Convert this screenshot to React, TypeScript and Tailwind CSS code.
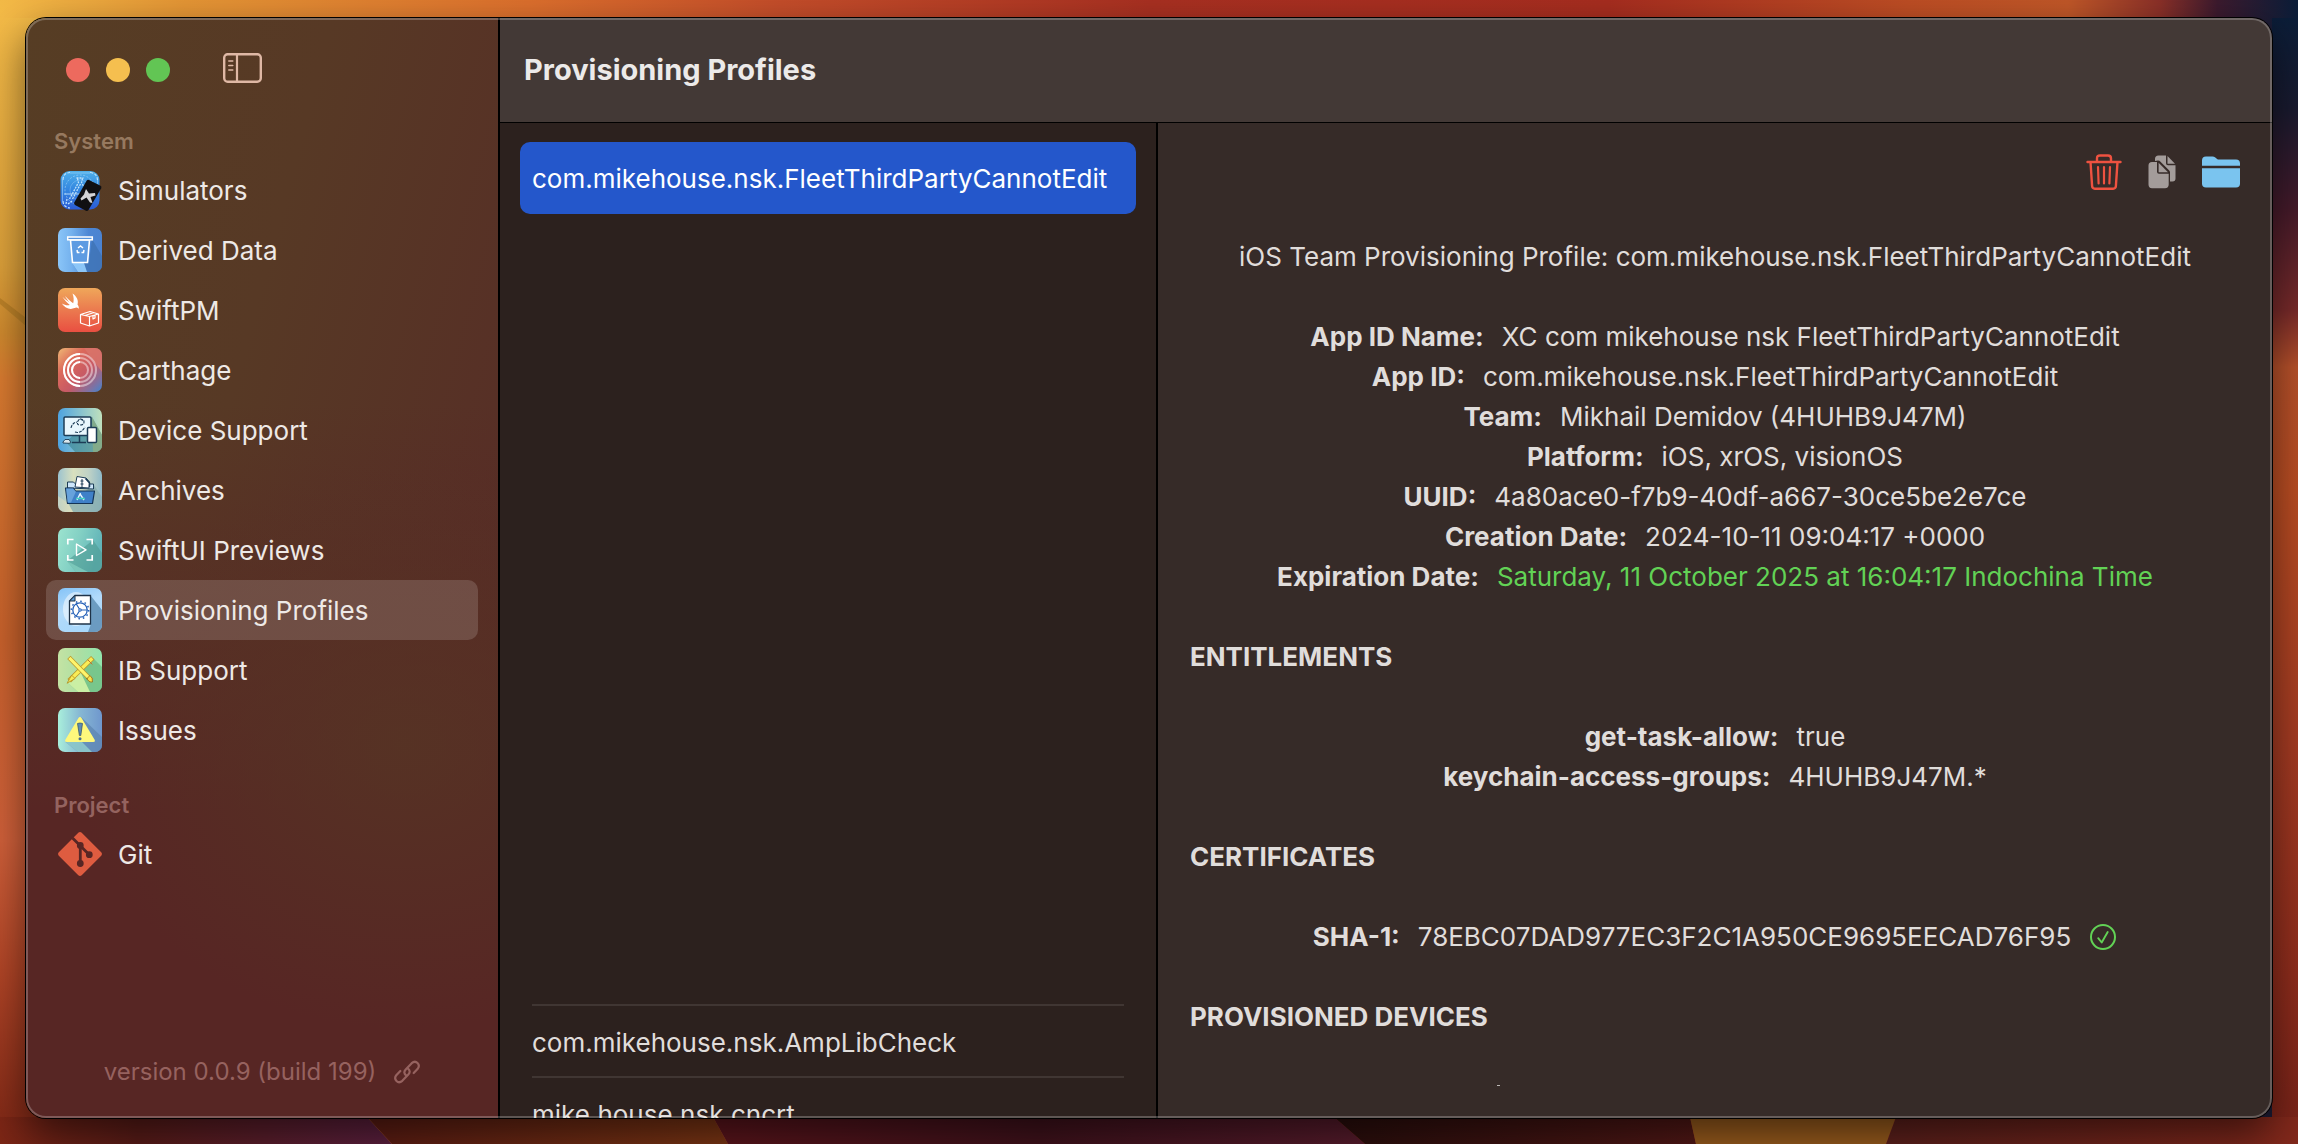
import type { ReactNode } from "react";

/* ---------- sidebar artwork, 44 x 44 tiles ---------- */

type TileProps = { id: string; x2?: number; y2?: number; stops: [number, string][]; children: ReactNode };

function Tile({ id, x2 = 0, y2 = 0, stops, children }: TileProps) {
  return (
    <svg viewBox="0 0 44 44" className="size-11 shrink-0" aria-hidden="true">
      <defs>
        <linearGradient id={id} x1="0" y1="0" x2={x2} y2={y2}>
          {stops.map(([offset, color]) => (
            <stop key={offset} offset={offset} stopColor={color} />
          ))}
        </linearGradient>
        <clipPath id={id + "-clip"}>
          <rect width="44" height="44" rx="7" />
        </clipPath>
      </defs>
      <g clipPath={`url(#${id}-clip)`}>
        <rect width="44" height="44" fill={`url(#${id})`} />
        {children}
      </g>
    </svg>
  );
}

function SimulatorsIcon() {
  return (
    <svg viewBox="0 0 44 44" className="size-11 shrink-0" aria-hidden="true">
      <defs>
        <linearGradient id="sim" x1="0" y1="0" x2="0" y2="1">
          <stop offset="0" stopColor="#4fb0ea" />
          <stop offset="0.5" stopColor="#3285e0" />
          <stop offset="1" stopColor="#2c5cd6" />
        </linearGradient>
      </defs>
      <rect x="2.5" y="3" width="39" height="38.500" rx="9" fill="url(#sim)" />
      <g fill="none" stroke="#bfe2fb">
        <path d="M4.500 33V12M39.500 12v4M12 5h20" strokeWidth="0.800" opacity="0.600" />
        <path d="M5 12q0-7 7-7.500M32 4.500q7 .5 7.500 7.500M5 33q0 6 7 7" strokeWidth="1.200" strokeDasharray="3 1.500" />
        <circle cx="22" cy="22" r="15" strokeWidth="0.700" strokeDasharray="2 1.500" opacity="0.700" />
        <circle cx="22" cy="22" r="10" strokeWidth="0.600" opacity="0.500" />
        <path d="M18.500 10h7M19.500 10.500l1 4-9 16.500M24.500 10.500l-1 4 5 9M22.500 16l-8.500 16M9 31l-1 5M14 33l-4 3" strokeWidth="1.300" strokeDasharray="2 1" />
        <path d="M6 26h16" strokeWidth="0.900" />
      </g>
      <path d="M31 12l11.500 5.800q1.500 .9 .7 2.400L30.500 42q-1 1.600-2.600 .8L17 37q-1.500-.8-.7-2.400L28.600 12.800q.9-1.500 2.400-.8z" fill="#101013" />
      <path d="M28 21l3 4.500 6-.5.500 2.500-5 1.500 2 6-2.500-.5-3.500-5-5 3-1-2 3.500-4z" fill="#d4d4d6" />
    </svg>
  );
}

function DerivedDataIcon() {
  return (
    <Tile id="derived" x2={1} stops={[[0, "#8ac5f8"], [0.3, "#75b2ee"], [0.7, "#4c86d4"], [1, "#4b83d0"]]}>
      <path d="M34 11l10 17v16H20l-6-9 17-1z" fill="#3d70b0" opacity="0.700" />
      <path d="M14 35l6 9h9l-3-9z" fill="#8cc6f8" />
      <path d="M12.500 12h19l-2 22.500h-15z" fill="#5d9be2" stroke="#fff" strokeWidth="1.600" />
      <rect x="9.700" y="9" width="24.600" height="2.800" fill="#5593dc" stroke="#fff" strokeWidth="1.500" />
      <path d="M20 20l2.500-2 2.500 2M19 22l.5 2.500h2M26 22l-.5 2.500h-2" fill="none" stroke="#fff" strokeWidth="1.500" />
    </Tile>
  );
}

function SwiftPMIcon() {
  return (
    <Tile id="spm" y2={1} stops={[[0, "#efa75a"], [0.5, "#eb7a4f"], [1, "#e94f41"]]}>
      <path
        d="M14.500 5.500c4.200 2.800 6.300 7 5 11 1.400 1.800 1.500 3.600 1.100 4.300-1.300-1.500-2.600-1.400-4-.7-4.600 2-9.500 .3-12.800-4.600 3.200 1.800 6 2.300 8 1.400-3-2.300-5.700-5.300-7.400-8.100 2.400 2.200 5.200 4.400 7.200 5.700-1.700-1.900-3.500-4.400-4.600-6.500 2.700 2.900 5.600 5.400 8.200 7.200.8-3 .6-6.400-.7-9.700z"
        fill="#fff"
      />
      <path d="M22.500 26.500l9 2 9-2.500v9l-9 3-9-3zM31.500 28.500V38M22.500 26.500l9.500-3 8.500 2.500M27 27.500l9-3M35 27v4l2-1v-3" fill="none" stroke="#fff" strokeWidth="1.200" strokeLinejoin="round" />
    </Tile>
  );
}

function CarthageIcon() {
  return (
    <Tile id="carthage" x2={1} y2={1} stops={[[0, "#efb976"], [0.3, "#dc6a5b"], [0.6, "#c75a66"], [0.85, "#7a73a6"], [1, "#3f85d0"]]}>
      <path d="M44 0v24L26 0z" fill="#d9756a" opacity="0.800" />
      <g fill="none" stroke="#fff">
        <g opacity="0.450">
          <circle cx="22" cy="22" r="16" strokeWidth="2" />
          <circle cx="22" cy="22" r="12" strokeWidth="2" />
          <circle cx="22" cy="22" r="8" strokeWidth="2" />
        </g>
        <path d="M22 6a16 16 0 0 0 0 32M22 10a12 12 0 0 0 0 24M22 14a8 8 0 0 0 0 16" strokeWidth="2" />
      </g>
    </Tile>
  );
}

function DeviceSupportIcon() {
  return (
    <Tile id="device" x2={1} stops={[[0, "#4ea3e0"], [0.5, "#86c2cf"], [1, "#bfe0bd"]]}>
      <path d="M34 9l10 18v17H17l-9-10z" fill="#39828c" opacity="0.600" />
      <path d="M34 9l10 18v17h-9z" fill="#8fae80" opacity="0.700" />
      <rect x="6" y="9" width="27" height="18.500" rx="1" fill="#e9f7fd" stroke="#1c3c56" strokeWidth="1.500" />
      <path d="M21.500 28v6M14 34.500h14" stroke="#1c3c56" strokeWidth="1.500" />
      <path d="M13 20q1-5 6-6M22 11q4 0 4 3t-4 3-2-4 5 0M17 24q6 2 10-5" fill="none" stroke="#1c3c56" strokeWidth="1.100" strokeDasharray="3 1" />
      <rect x="29.500" y="19.500" width="9" height="15" rx="1" fill="#fff" stroke="#1c3c56" strokeWidth="1.500" />
      <path d="M5 34l2-2.500h4l2 3-2 .8-6-.3z" fill="#dbe8ee" stroke="#1c3c56" strokeWidth="0.900" />
    </Tile>
  );
}

function ArchivesIcon() {
  return (
    <Tile id="archives" x2={1} stops={[[0, "#9cc3cf"], [0.35, "#d9e0be"], [0.7, "#bfd2c6"], [1, "#8fbac8"]]}>
      <path d="M36 17l8 12v15H15l-5-9z" fill="#88aeb0" opacity="0.800" />
      <path d="M10 35l5 9H0V28z" fill="#e5dfba" opacity="0.500" />
      <path d="M9.500 20v-6h6l2 2h18v5z" fill="#cde6fa" stroke="#1c3c56" strokeWidth="1" />
      <path d="M17 19l2-10.500 9 1.500 3.500 4-.5 6z" fill="#fff" stroke="#1c3c56" strokeWidth="1" />
      <path d="M24 11v8M22.500 13h3M22.500 16h3" stroke="#1c3c56" strokeWidth="1" />
      <path d="M27.500 10.500l4 4.500v4" fill="none" stroke="#1c3c56" strokeWidth="1.500" />
      <path d="M7.500 20h8l2 3h19l-2 12.500h-25z" fill="#3f80c8" stroke="#143457" strokeWidth="1.200" strokeLinejoin="round" />
      <path d="M8 20.500h7l3 3-5 11H9.500z" fill="#79b0e4" opacity="0.700" />
      <path d="M22.500 25l-3.500 7M22 26l4 6" stroke="#e7f6ff" strokeWidth="1.400" />
      <path d="M18 30.500h9" stroke="#45d0c0" strokeWidth="1.300" />
    </Tile>
  );
}

function PreviewsIcon() {
  return (
    <Tile id="previews" x2={1} y2={0.3} stops={[[0, "#9ce4cf"], [0.5, "#83d0c4"], [1, "#62b4b8"]]}>
      <path d="M35 12l9 13v19H18L9 33z" fill="#4f9b93" opacity="0.600" />
      <path d="M9 33l9 11h12z" fill="#86d1c2" opacity="0.700" />
      <path d="M15.500 11.500H9.800v5M28.500 11.500h5.700v5M15.500 32H9.800v-5M28.500 32h5.700v-5" fill="none" stroke="#fff" strokeWidth="1.700" />
      <path d="M18.500 16v11.500L28 21.800z" fill="none" stroke="#fff" strokeWidth="1.400" strokeLinejoin="round" />
    </Tile>
  );
}

function ProfilesIcon() {
  return (
    <Tile id="profiles" x2={0.4} y2={1} stops={[[0, "#84c3f7"], [0.5, "#b2dafa"], [1, "#a9d8fb"]]}>
      <ellipse cx="18" cy="21" rx="13" ry="17" fill="#fff" opacity="0.500" />
      <path d="M33 8l11 14v22H30l3-8z" fill="#6090b6" opacity="0.850" />
      <path d="M17 7.500h15.500V36H11.500V13z" fill="#fff" stroke="#1f3348" strokeWidth="1.300" />
      <path d="M17 7.500V13h-5.500z" fill="#5f9fd8" stroke="#1f3348" strokeWidth="1" />
      <g fill="none" stroke="#2762b8">
        <circle cx="22" cy="22" r="7.200" strokeWidth="1.300" />
        <circle cx="22" cy="22" r="8.700" strokeWidth="1.500" strokeDasharray="1.600 2.950" />
        <circle cx="22" cy="22" r="1.200" strokeWidth="1.100" />
        <path d="M23 22h6.500M21.400 21l-3.400-5.500M21.400 23l-3.400 5.500" strokeWidth="1.200" />
      </g>
    </Tile>
  );
}

function IBSupportIcon() {
  return (
    <Tile id="ib" x2={1} stops={[[0, "#c4e3a3"], [0.5, "#acdfa3"], [1, "#92e4ad"]]}>
      <path d="M35 10l9 9v25H20L9 34z" fill="#6fbf84" opacity="0.800" />
      <path d="M9 34l11 10h12L22 23z" fill="#d3f3a6" opacity="0.900" />
      <g strokeLinecap="square">
        <path d="M33 11.500L13 31" stroke="#b8962a" strokeWidth="5" />
        <path d="M33 11.500L13 31" stroke="#f9ec56" strokeWidth="3.400" />
        <path d="M14 27.500l3 3-7.500 4.500z" fill="#f9ec56" stroke="#b8962a" strokeWidth="0.900" />
        <path d="M12.500 11L32 31" stroke="#b8962a" strokeWidth="4.600" />
        <path d="M12.500 11L32 31" stroke="#fdf46c" strokeWidth="3.200" />
        <path d="M29 30.500l3-3q3 2 2.500 6.500-4 .5-5.500-3.500z" fill="#fae24c" stroke="#96731c" strokeWidth="0.900" />
        <path d="M30 12l4 4" stroke="#c4702c" strokeWidth="1" />
      </g>
    </Tile>
  );
}

function IssuesIcon() {
  return (
    <Tile id="issues" x2={1} stops={[[0, "#a9efdb"], [0.5, "#86b7d3"], [1, "#6f97cd"]]}>
      <path d="M23 9l21 20v15H20L7.500 34z" fill="#5e86b2" opacity="0.750" />
      <path d="M7.500 34L20 44h14L24 34z" fill="#98d9d0" opacity="0.700" />
      <path d="M22 9q1 0 1.700 1.200L36.500 31.500q1.200 2.500-1.200 2.500H8.700q-2.400 0-1.200-2.500L20.300 10.200Q21 9 22 9z" fill="#fef87c" />
      <path d="M19.500 15.500q2.500-1 5 0l-1.700 12h-1.400z" fill="#5d8bb3" stroke="#2d4a66" strokeWidth="0.700" />
      <circle cx="22" cy="30.800" r="1.500" fill="#4b6f90" />
    </Tile>
  );
}

function GitIcon() {
  return (
    <svg viewBox="0 0 44 44" className="size-11 shrink-0" aria-hidden="true">
      <path d="M20.300 .8q1.700-1.500 3.400 0l19.500 19.500q1.500 1.700 0 3.400L23.700 43.200q-1.700 1.500-3.400 0L.8 23.700q-1.500-1.700 0-3.400z" fill="#de5c40" />
      <g stroke="#572624" strokeWidth="2.800" fill="#572624">
        <path d="M14.500 6l7.500 7.500 9 9M22.300 14v17" />
        <circle cx="22.300" cy="13.500" r="2" />
        <circle cx="31.300" cy="22.700" r="2" />
        <circle cx="22.300" cy="31.500" r="2" />
      </g>
    </svg>
  );
}

/* ---------- toolbar and inline glyphs ---------- */

function SidebarToggleIcon() {
  return (
    <svg viewBox="0 0 39 30" className="h-[30px] w-[39px]" fill="none" stroke="#dfb8a5" aria-hidden="true">
      <rect x="1.200" y="1.200" width="36.600" height="27.600" rx="3.500" strokeWidth="2.400" />
      <path d="M14 1.500v27" strokeWidth="2.200" />
      <path d="M5.800 8h4M5.800 12.500h4M5.800 17h4" strokeWidth="1.500" strokeLinecap="round" />
    </svg>
  );
}

function TrashIcon() {
  return (
    <svg viewBox="0 0 36 36" className="size-9" fill="none" stroke="#ee5240" strokeLinecap="round" strokeLinejoin="round" aria-hidden="true">
      <path d="M1.500 8h33M4.500 8l1.600 24q.2 2.700 2.800 2.700h18.200q2.600 0 2.800-2.700L31.500 8M11 8V4.500Q11 1.500 14 1.500h8q3 0 3 3V8" strokeWidth="2.400" />
      <path d="M12 13l.6 16.500M18 13v16.500M24 13l-.6 16.500" strokeWidth="2.200" />
    </svg>
  );
}

function CopyIcon() {
  return (
    <svg viewBox="0 0 28 34" className="h-[34px] w-7" fill="#a39c9a" aria-hidden="true">
      <path d="M7 6V4Q7 .5 10.500 .5H18v7.700q0 2 2 2h7.500V23.500q0 3-3 3H22V17.500q0-1.300-1-2.300l-8.500-8.500Q11.500 5.500 10 5.500z" />
      <path d="M19.500 1l7.500 7.700h-7.500z" />
      <path d="M4 7h5v9.700Q9 18.700 11 18.700h9.700V29.500q0 3.700-3.700 3.700H4Q.5 33.200 .5 29.500V10.500Q.5 7 4 7z" />
      <path d="M10.600 7.700l9.400 9.500h-9.400z" />
    </svg>
  );
}

function FolderIcon() {
  return (
    <svg viewBox="0 0 38 32" className="h-8 w-[38px]" fill="#7ac4ef" aria-hidden="true">
      <path d="M0 9.700V4.500Q0 .5 4 .5h6.500q1.600 0 2.800 1l1.500 1.200q1 .9 2.400 .9H34q4 0 4 4v2.100z" />
      <path d="M0 12.300h38v15.200q0 4-4 4H4q-4 0-4-4z" />
    </svg>
  );
}

function LinkIcon() {
  return (
    <svg viewBox="0 0 26 26" className="size-[26px]" fill="none" stroke="#96625f" strokeWidth="2.200" strokeLinecap="round" aria-hidden="true">
      <path d="M12.300 16.600q-3.600-2.800-.6-6.200l6-6.200q3.200-2.800 5.800-.2t.2 5.800l-4 4.200" />
      <path d="M13.700 9.400q3.600 2.800 .6 6.200l-6 6.200q-3.200 2.800-5.800 .2t-.2-5.800l4-4.200" />
    </svg>
  );
}

function CheckCircleIcon() {
  return (
    <svg viewBox="0 0 28 28" className="size-7" fill="none" stroke="#62d255" strokeLinecap="round" strokeLinejoin="round" role="img" aria-label="Valid">
      <circle cx="14" cy="14" r="12" strokeWidth="2" />
      <path d="M9.200 15.200l3.500 4.300 6-10.500" strokeWidth="1.900" />
    </svg>
  );
}

/* ---------- desktop wallpaper ---------- */

function Wallpaper() {
  return (
    <svg viewBox="0 0 2298 1144" preserveAspectRatio="none" className="absolute inset-0 size-full" aria-hidden="true">
      <defs>
        <linearGradient id="wp-top" x1="0" y1="0" x2="1" y2="0">
          <stop offset="0" stopColor="#f3ba47" />
          <stop offset="0.080" stopColor="#e59635" />
          <stop offset="0.230" stopColor="#dc6f2d" />
          <stop offset="0.340" stopColor="#c44d2a" />
          <stop offset="0.500" stopColor="#a83021" />
          <stop offset="0.700" stopColor="#a62d1f" />
          <stop offset="0.830" stopColor="#bd4d24" />
          <stop offset="0.900" stopColor="#c05728" />
          <stop offset="0.940" stopColor="#8a3028" />
          <stop offset="0.965" stopColor="#3c1a2e" />
          <stop offset="1" stopColor="#0b1d38" />
        </linearGradient>
        <linearGradient id="wp-left" x1="0" y1="0" x2="0" y2="1">
          <stop offset="0" stopColor="#f3ba47" />
          <stop offset="0.220" stopColor="#dca03a" />
          <stop offset="0.280" stopColor="#d08a2e" />
          <stop offset="0.320" stopColor="#d97b30" />
          <stop offset="0.550" stopColor="#c9622c" />
          <stop offset="0.730" stopColor="#d0603a" />
          <stop offset="0.850" stopColor="#b04426" />
          <stop offset="1" stopColor="#7c2615" />
        </linearGradient>
        <linearGradient id="wp-right" x1="0" y1="0" x2="0" y2="1">
          <stop offset="0" stopColor="#0b1d38" />
          <stop offset="0.080" stopColor="#191a2f" />
          <stop offset="0.170" stopColor="#451a2a" />
          <stop offset="0.260" stopColor="#782a2a" />
          <stop offset="0.310" stopColor="#b5502a" />
          <stop offset="0.420" stopColor="#b84c22" />
          <stop offset="0.650" stopColor="#a33a22" />
          <stop offset="0.850" stopColor="#8e2c1c" />
          <stop offset="1" stopColor="#762218" />
        </linearGradient>
        <linearGradient id="wp-b1" x1="0" y1="0" x2="1" y2="0">
          <stop offset="0" stopColor="#7c2615" />
          <stop offset="0.350" stopColor="#5a1c18" />
          <stop offset="1" stopColor="#5c2040" />
        </linearGradient>
        <linearGradient id="wp-b2" x1="0" y1="0" x2="1" y2="0">
          <stop offset="0" stopColor="#5c1c13" />
          <stop offset="1" stopColor="#7c3614" />
        </linearGradient>
        <linearGradient id="wp-b3" x1="0" y1="0" x2="1" y2="0">
          <stop offset="0" stopColor="#5c151c" />
          <stop offset="0.500" stopColor="#40121c" />
          <stop offset="1" stopColor="#581c2d" />
        </linearGradient>
        <linearGradient id="wp-b4" x1="0" y1="0" x2="1" y2="0">
          <stop offset="0" stopColor="#2a0e0c" />
          <stop offset="1" stopColor="#521816" />
        </linearGradient>
        <linearGradient id="wp-b5" x1="0" y1="0" x2="1" y2="0">
          <stop offset="0" stopColor="#5c201c" />
          <stop offset="1" stopColor="#82281b" />
        </linearGradient>
      </defs>
      <rect width="2298" height="1144" fill="url(#wp-top)" />
      <rect y="18" width="100" height="1126" fill="url(#wp-left)" />
      <rect x="2272" y="18" width="26" height="1126" fill="url(#wp-right)" />
      <path d="M0 298L26 318V326L0 304z" fill="#bd8228" />
      <path d="M0 1117H367L392 1144H0z" fill="url(#wp-b1)" />
      <path d="M367 1117H713L728 1144H392z" fill="url(#wp-b2)" />
      <path d="M713 1117H1334L1365 1144H728z" fill="url(#wp-b3)" />
      <path d="M1334 1117H1690L1696 1144H1365z" fill="url(#wp-b4)" />
      <path d="M1690 1117H1896L1886 1144H1696z" fill="#9a5c1d" />
      <path d="M1896 1117H2298V1144H1886z" fill="url(#wp-b5)" />
    </svg>
  );
}

/* ---------- data ---------- */

const systemItems: { label: string; icon: ReactNode }[] = [
  { label: "Simulators", icon: <SimulatorsIcon /> },
  { label: "Derived Data", icon: <DerivedDataIcon /> },
  { label: "SwiftPM", icon: <SwiftPMIcon /> },
  { label: "Carthage", icon: <CarthageIcon /> },
  { label: "Device Support", icon: <DeviceSupportIcon /> },
  { label: "Archives", icon: <ArchivesIcon /> },
  { label: "SwiftUI Previews", icon: <PreviewsIcon /> },
  { label: "Provisioning Profiles", icon: <ProfilesIcon /> },
  { label: "IB Support", icon: <IBSupportIcon /> },
  { label: "Issues", icon: <IssuesIcon /> },
];

const profileFields = [
  { label: "App ID Name:", value: "XC com mikehouse nsk FleetThirdPartyCannotEdit" },
  { label: "App ID:", value: "com.mikehouse.nsk.FleetThirdPartyCannotEdit" },
  { label: "Team:", value: "Mikhail Demidov (4HUHB9J47M)" },
  { label: "Platform:", value: "iOS, xrOS, visionOS" },
  { label: "UUID:", value: "4a80ace0-f7b9-40df-a667-30ce5be2e7ce" },
  { label: "Creation Date:", value: "2024-10-11 09:04:17 +0000" },
  { label: "Expiration Date:", value: "Saturday, 11 October 2025 at 16:04:17 Indochina Time", valid: true },
];

const entitlements = [
  { label: "get-task-allow:", value: "true" },
  { label: "keychain-access-groups:", value: "4HUHB9J47M.*" },
];

/* ---------- parts ---------- */

function NavItem({ label, icon, selected = false }: { label: string; icon: ReactNode; selected?: boolean }) {
  return (
    <li>
      <button
        type="button"
        aria-current={selected ? "page" : undefined}
        className={`flex h-15 w-full items-center gap-4 rounded-[10px] px-3 text-left text-[#eee9e6] ${selected ? "bg-white/15" : ""}`}
      >
        {icon}
        <span className="pt-0.5">{label}</span>
      </button>
    </li>
  );
}

function Field({ label, value, valid = false, children }: { label: string; value: string; valid?: boolean; children?: ReactNode }) {
  return (
    <div className="flex items-center justify-center gap-[18px]">
      <dt className="font-bold">{label}</dt>
      <dd className={valid ? "text-[#62d255]" : ""}>{value}</dd>
      {children}
    </div>
  );
}

export default function App() {
  return (
    <div className="relative flex h-screen overflow-hidden px-[26px] pt-[18px] pb-[26px] font-['Inter',sans-serif] text-[26px] leading-10 text-[#e0dddb]">
      <Wallpaper />
      <div className="relative flex min-w-0 flex-1 overflow-hidden rounded-[20px] shadow-[0_0_0_1px_#000,0_16px_40px_rgba(0,0,0,0.55)] after:pointer-events-none after:absolute after:inset-0 after:rounded-[20px] after:shadow-[inset_0_0_0_2px_rgba(255,255,255,0.24)]">
        <aside className="flex w-[474px] shrink-0 flex-col border-r-2 border-black bg-[radial-gradient(ellipse_70%_26%_at_80%_66%,#563524cc,transparent),linear-gradient(to_bottom,transparent_35%,#572624_72%),linear-gradient(105deg,#563d24_0%,#573925_40%,#573026_75%,#572b25_100%)] px-5">
          <div className="flex h-[104px] shrink-0 items-center gap-4 pl-5">
            <button type="button" aria-label="Close" className="size-6 rounded-full bg-[#ed6a5e]" />
            <button type="button" aria-label="Minimize" className="size-6 rounded-full bg-[#f5bf4f]" />
            <button type="button" aria-label="Zoom" className="size-6 rounded-full bg-[#62c554]" />
            <button type="button" aria-label="Toggle sidebar" className="ml-[37px] pb-1">
              <SidebarToggleIcon />
            </button>
          </div>
          <nav aria-label="Sections">
            <h2 className="pl-2 text-[22px] leading-[38px] font-semibold text-[#96795f]">System</h2>
            <ul>
              {systemItems.map((item) => (
                <NavItem key={item.label} {...item} selected={item.label === "Provisioning Profiles"} />
              ))}
            </ul>
            <h2 className="mt-[26px] pl-2 text-[22px] leading-[38px] font-semibold text-[#94635f]">Project</h2>
            <ul>
              <NavItem label="Git" icon={<GitIcon />} />
            </ul>
          </nav>
          <footer className="mt-auto flex items-center justify-center gap-[18px] pb-[26px] text-2xl leading-10 text-[#96625f]">
            <span>version 0.0.9 (build 199)</span>
            <a href="#repository" aria-label="Open project page">
              <LinkIcon />
            </a>
          </footer>
        </aside>

        <div className="flex min-w-0 flex-1 flex-col">
          <header className="flex h-[105px] shrink-0 items-center border-b border-black bg-[#433936] px-6">
            <h1 className="text-[29px] font-bold text-[#eceae9]">Provisioning Profiles</h1>
          </header>

          <div className="flex min-h-0 flex-1">
            <ul className="w-[658px] shrink-0 overflow-hidden border-r-2 border-black bg-[#2c211e] px-5 pt-[19px]">
              <li>
                <button type="button" aria-pressed="true" className="flex h-18 w-full items-center rounded-[10px] bg-[#2457cb] px-3 pt-0.5 text-white">
                  com.mikehouse.nsk.FleetThirdPartyCannotEdit
                </button>
              </li>
              <li aria-hidden="true" className="mx-3 h-[792px] border-b-2 border-[#403633]" />
              <li className="mx-3 border-b-2 border-[#403633]">
                <button type="button" className="flex h-[70px] w-full items-center pt-1">
                  com.mikehouse.nsk.AmpLibCheck
                </button>
              </li>
              <li className="mx-3">
                <button type="button" className="flex h-[70px] w-full items-center pt-1">
                  mike.house.nsk.cncrt
                </button>
              </li>
            </ul>

            <main className="min-w-0 flex-1 overflow-hidden bg-[#362b28] px-8">
              <div className="flex h-[98px] items-center justify-end gap-[26px]">
                <button type="button" aria-label="Delete profile">
                  <TrashIcon />
                </button>
                <button type="button" aria-label="Copy profile">
                  <CopyIcon />
                </button>
                <button type="button" aria-label="Show in Finder">
                  <FolderIcon />
                </button>
              </div>

              <div className="flex flex-col gap-10 pt-4">
                <p className="text-center">iOS Team Provisioning Profile: com.mikehouse.nsk.FleetThirdPartyCannotEdit</p>
                <dl>
                  {profileFields.map((field) => (
                    <Field key={field.label} {...field} />
                  ))}
                </dl>
                <h2 className="font-bold">ENTITLEMENTS</h2>
                <dl>
                  {entitlements.map((field) => (
                    <Field key={field.label} {...field} />
                  ))}
                </dl>
                <h2 className="font-bold">CERTIFICATES</h2>
                <dl>
                  <Field label="SHA-1:" value="78EBC07DAD977EC3F2C1A950CE9695EECAD76F95">
                    <dd className="flex">
                      <CheckCircleIcon />
                    </dd>
                  </Field>
                </dl>
                <h2 className="font-bold">PROVISIONED DEVICES</h2>
                <div className="flex pt-2 pl-[307px]">
                  <span className="h-px w-[3px] bg-[#bdb8b6]" />
                </div>
              </div>
            </main>
          </div>
        </div>
      </div>
    </div>
  );
}
